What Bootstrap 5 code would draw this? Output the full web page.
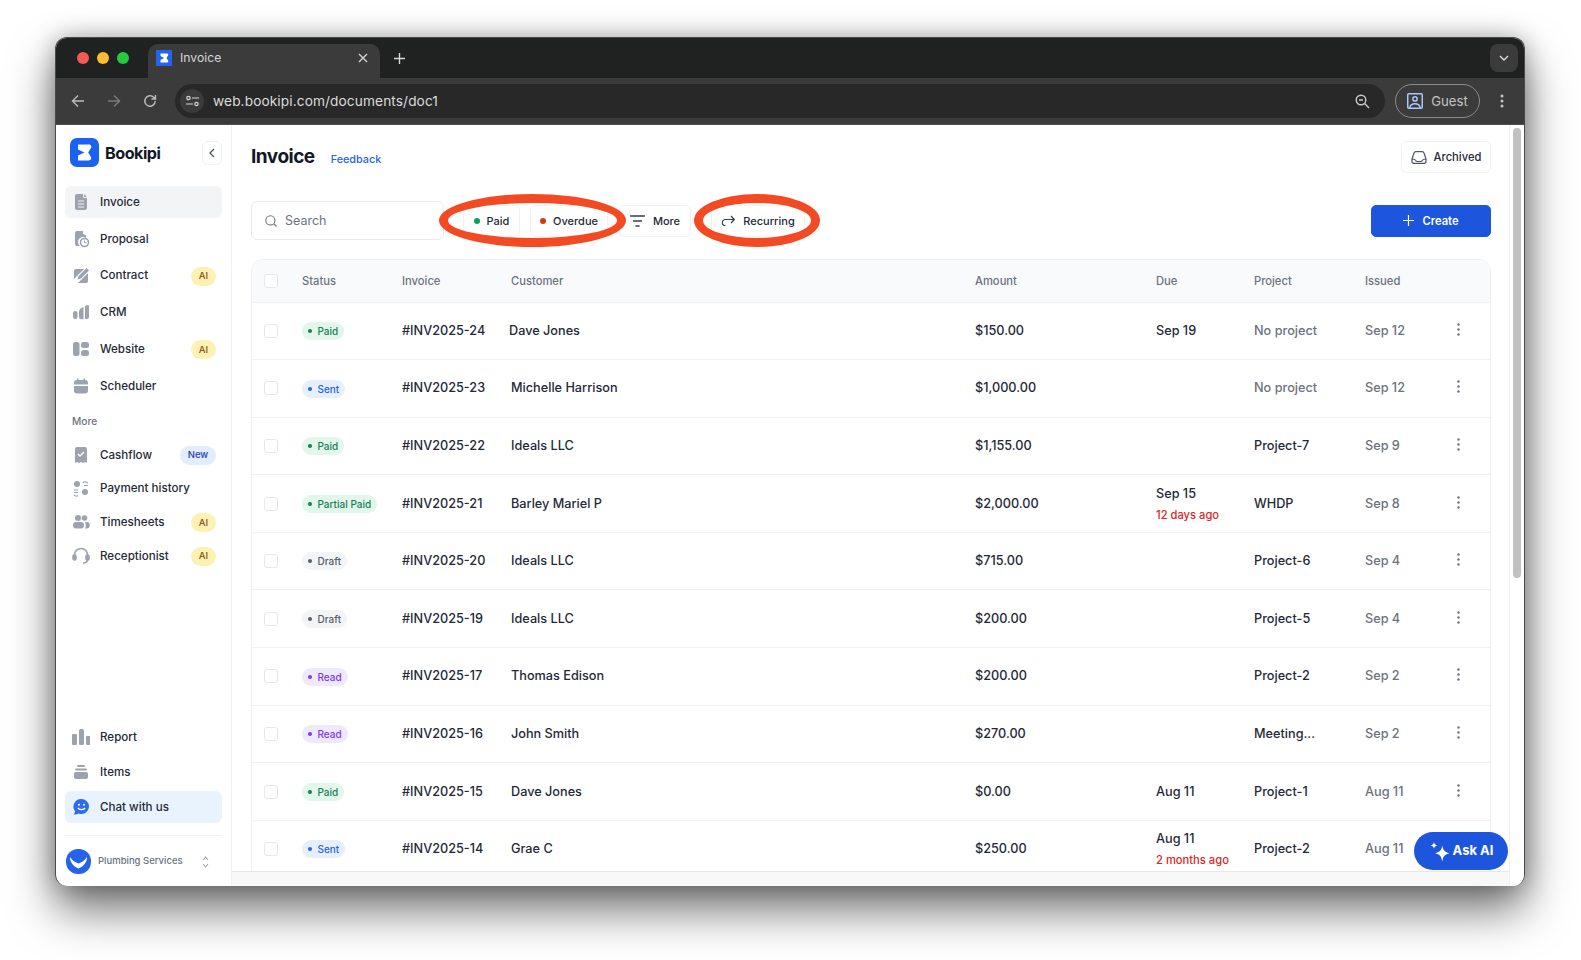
<!DOCTYPE html>
<html lang="en">
<head>
<meta charset="utf-8">
<title>Invoice</title>
<link href="https://cdn.jsdelivr.net/npm/bootstrap@5.3.0/dist/css/bootstrap.min.css" rel="stylesheet">
<style>
html,body{height:100%}
body{background:#fff;font-family:Inter,"Liberation Sans",sans-serif;color:#1f2937;overflow:hidden;padding:37px 56px 74px 55px}
.win{height:849px;border-radius:12px;overflow:hidden;box-shadow:0 24px 46px rgba(0,0,0,.55),0 0 24px rgba(0,0,0,.28);background:#fff;position:relative;border:1px solid #4a4a4a;border-bottom:0}
.strip{height:40px;background:#202221;position:relative}
.light{width:12px;height:12px;border-radius:50%}
.ltr{background:#f25c54}.lty{background:#febc2e}.ltg{background:#27c93f}
.lights{margin-left:21px;gap:8px}
.ctab{width:232px;height:34px;margin-left:19px;margin-top:6px;background:#3b3b3b;border-radius:10px 10px 0 0;color:#d6d6d6;font-size:12.2px;padding:0 12px 6px 8px;gap:8px}
.favi{width:16px;height:16px;flex:none}
.plus{margin-left:14px}
.expand{width:28px;height:28px;border-radius:8px;background:#3b3b3b;margin-right:6px}
.tbar{height:47px;background:#3b3b3b;padding:0 20px 0 15px;color:#b5b5b5;border-bottom:1px solid #4e4e4e}
.nav2{margin-left:22px}
.omni{flex:1;height:34px;background:#282828;border-radius:17px;color:#dcdcdc;font-size:13.7px;padding:0 15px 0 5px;margin:0 10px 0 18px;letter-spacing:.1px}
.tune{width:24px;height:24px;border-radius:50%;background:#3b3b3b;margin-right:9px}
.guest{width:85px;height:34px;border:1px solid #8b8b8b;border-radius:17px;font-size:13.2px;color:#c3c3c3;gap:8px;margin-right:20px}
.guest span{padding-top:1px}
.appw{height:762px;position:relative}
.side{width:176px;flex:none;border-right:1px solid #f0f1f3;padding:13px 9px 0 9px;height:762px}
.logo{width:29px;height:29px;flex:none;margin-left:5px}
.bname{font-size:16.2px;font-weight:700;color:#111827;letter-spacing:-.5px;margin-left:6px;flex:1;padding-top:2px}
.coll{width:20px;height:24px;border:1px solid #f0f1f3;border-radius:6px;margin-top:1px}
.mi{height:32px;border-radius:6px;font-size:11.6px;font-weight:500;color:#1f2937;padding:0 6px 0 7px}
.mi svg{width:18px;height:18px;flex:none;margin-right:10px}
.mi .lbl{flex:1;padding-top:1px}
.g1{margin-top:19px;display:flex;flex-direction:column;gap:4.8px}
.g2{display:flex;flex-direction:column;gap:1.7px}
.g3{margin-top:auto;display:flex;flex-direction:column;gap:3px}
.more{font-size:10.2px;color:#6b7280;font-weight:500;margin:13px 0 11px 7px;line-height:13px}
.on{background:#f3f4f6}
.chat{background:#e9f3fe}
.pillai{background:#fdf2b3;color:#854d0e;font-size:9.5px;font-weight:500;border-radius:10px;width:25px;height:19px;margin-top:1px}
.pillnew{background:#e2edfd;color:#1e40af;font-size:9.5px;font-weight:500;border-radius:10px;width:36px;height:19px;margin-top:1px}
.foot{border-top:1px solid #f0f1f3;height:52px;margin-top:9px;padding:0 0 0 1px;font-size:9.5px;color:#6b7280;font-weight:500;position:relative}
.org{width:25px;height:25px;flex:none;margin-right:7px}
.chev{margin-right:13px}
.main{flex:1;min-width:0;height:746px;padding:17px 18px 0 19px;overflow:hidden}
.ttl{font-size:19px;font-weight:700;color:#111827;letter-spacing:-.5px;line-height:30px}
.fb{font-size:10.8px;font-weight:500;color:#2563eb;margin-left:16px;padding-top:10px}
.wbtn{border:1px solid #f0f1f3;border-radius:6px;background:#fff;font-size:11px;font-weight:500;color:#1f2937;height:32px;gap:7px}
.wbtn span,.srch span,.cbtn span{padding-top:1px}
.arch{width:90px;font-size:11.2px;margin-top:-1px}
.arch span{padding-top:0}
.bar{margin-top:28px;height:39px;position:relative}
.srch{width:193px;height:39px;border:1px solid #e8eaed;border-radius:6px;color:#6b7280;font-size:12.5px;padding-left:13px;gap:8px}
.f1{width:57px;margin-left:19px}.f2{width:78px;margin-left:10px}.f3{width:72px;margin-left:11px;gap:8px}.f4{width:94px;margin-left:20px;gap:8px}
.fdot{width:6px;height:6px;border-radius:50%}
.dgreen{background:#0f9d66}.dred{background:#cc3f0c}
.cbtn{width:120px;height:32px;background:#1d56dc;border-radius:5px;color:#fff;font-size:11.2px;font-weight:600;gap:8px;margin-left:auto;border:1px solid #1d56dc}
.ring{position:absolute;border:9px solid #f34a23;border-radius:50%;height:53px;top:-7px;pointer-events:none}
.r1{left:188px;width:187px}.r2{left:443px;width:126px}
.twrap{margin-top:19px;border:1px solid #f0f1f3;border-radius:12px 12px 0 0;overflow:hidden}
.tbl{width:100%;table-layout:fixed;border-collapse:collapse;margin:0}
.tbl th{background:#f9fafb;height:42px;font-size:11.2px;font-weight:500;color:#6b7280;padding:1px 0 0 0;vertical-align:middle;border-bottom:1px solid #f0f1f3}
.tbl td{height:57.6px;font-size:12.7px;font-weight:500;color:#1f2937;padding:0;vertical-align:middle;border-bottom:1px solid #f0f1f3;line-height:18px}
.c0{width:50px}.c1{width:100px}.c2{width:109px}.c3{width:464px}.c4{width:181px}.c5{width:98px}.c6{width:111px}.c7{width:83px}
.chk{display:block;width:14px;height:14px;border:1px solid #e5e7eb;border-radius:3px;background:#fff;margin-left:12px}
.st{display:inline-flex;align-items:center;gap:5.5px;height:18px;border-radius:9px;font-size:10px;font-weight:500;padding:0 6px;line-height:18px;vertical-align:middle}
.st i{width:4px;height:4px;border-radius:50%;background:currentColor;display:block}
.s-paid{background:#e2f6ea;color:#16805a}.s-sent{background:#e5efff;color:#2563eb}.s-draft{background:#f3f4f6;color:#565d6b}.s-read{background:#efe9fe;color:#7c3aed}
.gray{color:#6b7280!important}
.late{font-size:11.2px;color:#dc2626;display:block;margin-top:4px;line-height:16px}
.nudge{margin-left:-2px;display:inline-block}
.dots{display:block;width:3px;height:13px;margin-left:9px;margin-top:-3px}
.vbar{width:15px;flex:none;background:#fff;border-left:1px solid #f0f1f3;height:762px;padding:3px 3px 0 3px}
.thumb{height:450px;background:#c1c1c1;border-radius:4px}
.hbar{position:absolute;left:176px;right:15px;bottom:0;height:16px;background:#f8f8f8;border-top:1px solid #e8e8e8}
.askai{position:absolute;left:1358px;top:707px;width:94px;height:38px;border-radius:19px;background:#1d56dc;color:#fff;font-size:13px;font-weight:700;gap:3px}
</style>
</head>
<body>
<div class="win">
  <div class="strip d-flex">
    <div class="lights d-flex align-items-center"><span class="light ltr"></span><span class="light lty"></span><span class="light ltg"></span></div>
    <div class="ctab d-flex align-items-center">
      <svg class="favi" viewBox="0 0 16 16"><rect width="16" height="16" fill="#2563eb"/><path fill="#fff" d="M4.500 3.500h6.500c1.300 0 1.800 1.500.9 2.300L10.500 8l1.400 2.200c.9.800.4 2.300-.9 2.300H4.500V10l3.500-2-3.500-2z"/></svg>
      <span class="flex-grow-1">Invoice</span>
      <svg width="10" height="10" viewBox="0 0 10 10" stroke="#d8d8d8" stroke-width="1.3"><path d="M1 1l8 8M9 1l-8 8"/></svg>
    </div>
    <svg class="plus align-self-center" width="11" height="11" viewBox="0 0 11 11" stroke="#d8d8d8" stroke-width="1.4"><path d="M5.500 0v11M0 5.500h11"/></svg>
    <div class="ms-auto align-self-center expand d-flex align-items-center justify-content-center">
      <svg width="10" height="6" viewBox="0 0 10 6" fill="none" stroke="#ddd" stroke-width="1.4"><path d="M1 1l4 4 4-4"/></svg>
    </div>
  </div>
  <div class="tbar d-flex align-items-center">
    <svg width="14" height="14" viewBox="0 0 14 14" fill="none" stroke="#bdbdbd" stroke-width="1.4"><path d="M13 7H2M7 1.500 1.500 7 7 12.500"/></svg>
    <svg class="nav2" width="14" height="14" viewBox="0 0 14 14" fill="none" stroke="#7c7c7c" stroke-width="1.4"><path d="M1 7h11M7 1.500 12.500 7 7 12.500"/></svg>
    <svg class="nav2" width="14" height="14" viewBox="0 0 14 14" fill="none" stroke="#bdbdbd" stroke-width="1.4"><path d="M12.200 7a5.200 5.200 0 1 1-1.500-3.700L12.500 5M12.500 1v4h-4"/></svg>
    <div class="omni d-flex align-items-center">
      <span class="tune d-flex align-items-center justify-content-center">
        <svg width="13" height="12" viewBox="0 0 13 12" fill="none" stroke="#d5d5d5" stroke-width="1.2"><circle cx="2.500" cy="3" r="1.700"/><path d="M6 3h7M0 9h7"/><circle cx="10.500" cy="9" r="1.700"/></svg>
      </span>
      <span class="flex-grow-1">web.bookipi.com/documents/doc1</span>
      <svg width="15" height="15" viewBox="0 0 15 15" fill="none" stroke="#c8c8c8" stroke-width="1.4"><circle cx="6" cy="6" r="4.800"/><path d="M4 6h4M9.600 9.600 14 14"/></svg>
    </div>
    <div class="guest d-flex align-items-center justify-content-center">
      <svg width="16" height="16" viewBox="0 0 15 15" fill="none" stroke="#a8c7fa" stroke-width="1.4"><rect x=".7" y=".7" width="13.600" height="13.600" rx="1"/><circle cx="7.500" cy="5.600" r="2"/><path d="M2.500 14c.5-3 2.500-4 5-4s4.500 1 5 4"/></svg>
      <span>Guest</span>
    </div>
    <svg width="4" height="14" viewBox="0 0 4 14" fill="#c5c5c5"><circle cx="2" cy="2" r="1.500"/><circle cx="2" cy="7" r="1.500"/><circle cx="2" cy="12" r="1.500"/></svg>
  </div>

  <div class="appw d-flex">
    <aside class="side d-flex flex-column">
      <div class="d-flex align-items-center">
        <svg class="logo" viewBox="0 0 29 29"><rect width="29" height="29" rx="7" fill="#1a62f0"/><path fill="#fff" d="M8 6.500h11c2.300 0 3.200 2.800 1.500 4.200L18.200 14.500l2.300 3.800c1.500 1.700.5 4.200-1.700 4.200H8v-5l6.500-3-6.500-3z"/></svg>
        <span class="bname">Bookipi</span>
        <span class="coll d-flex align-items-center justify-content-center">
          <svg width="6" height="10" viewBox="0 0 6 10" fill="none" stroke="#4b5563" stroke-width="1.3"><path d="M5 1 1 5l4 4"/></svg>
        </span>
      </div>
      <div class="g1">
        <div class="mi on d-flex align-items-center"><svg viewBox="0 0 18 18" fill="#9ca3af"><path d="M3 3a2 2 0 0 1 2-2h6v2.500a1.500 1.500 0 0 0 1.500 1.500H15v10a2 2 0 0 1-2 2H5a2 2 0 0 1-2-2z"/><path d="M12 1l3 3h-3z"/><path d="M6 8h6M6 11h6M6 14h6" stroke="#f3f4f6" stroke-width="1"/></svg><span class="lbl">Invoice</span></div>
        <div class="mi d-flex align-items-center"><svg viewBox="0 0 18 18" fill="#9ca3af"><path d="M3 3a2 2 0 0 1 2-2h6v3l3 1v3a5 5 0 0 0-6 8H5a2 2 0 0 1-2-2z"/><circle cx="12.500" cy="12.500" r="4" fill="none" stroke="#9ca3af" stroke-width="1.600"/><path d="M12.500 10.500v2.300h2" fill="none" stroke="#9ca3af"/></svg><span class="lbl">Proposal</span></div>
        <div class="mi d-flex align-items-center"><svg viewBox="0 0 18 18" fill="#9ca3af"><path d="M2 4a2 2 0 0 1 2-2h8L2 12z"/><path d="M16 6v8a2 2 0 0 1-2 2H6z"/><path d="M14.500 1l2.500 2.500-8 8-3.500 1 1-3.500z"/></svg><span class="lbl">Contract</span><span class="pillai d-flex align-items-center justify-content-center">AI</span></div>
        <div class="mi d-flex align-items-center"><svg viewBox="0 0 18 18" fill="#9ca3af"><rect x="1" y="8" width="4.500" height="8" rx="2.200"/><path d="M7 9c0-2.500 2-4.500 4.500-5v12.200H9.200A2.200 2.200 0 0 1 7 14z"/><path d="M13 3.200c1-.7 2-1.200 3-1.200a1 1 0 0 1 1 1v11a2 2 0 0 1-2 2h-2z"/></svg><span class="lbl">CRM</span></div>
        <div class="mi d-flex align-items-center"><svg viewBox="0 0 18 18" fill="#9ca3af"><rect x="1" y="2" width="6.500" height="14" rx="2.500"/><rect x="9" y="2" width="8" height="6" rx="2.500"/><rect x="9" y="10" width="8" height="6" rx="2.500"/></svg><span class="lbl">Website</span><span class="pillai d-flex align-items-center justify-content-center">AI</span></div>
        <div class="mi d-flex align-items-center"><svg viewBox="0 0 18 18" fill="#9ca3af"><path d="M2 6a3 3 0 0 1 3-3V1.500h1.500V3h5V1.500H13V3a3 3 0 0 1 3 3v1.500H2z"/><path d="M2 9h14v4.500a3 3 0 0 1-3 3H5a3 3 0 0 1-3-3z"/></svg><span class="lbl">Scheduler</span></div>
      </div>
      <div class="more">More</div>
      <div class="g2">
        <div class="mi d-flex align-items-center"><svg viewBox="0 0 18 18" fill="#9ca3af"><path d="M3 3a2 2 0 0 1 2-2h8a2 2 0 0 1 2 2v14l-2-1-2 1-2-1-2 1-2-1-2 1z"/><path d="M6 8l2 2 4-4" fill="none" stroke="#fff" stroke-width="1.300"/></svg><span class="lbl">Cashflow</span><span class="pillnew d-flex align-items-center justify-content-center">New</span></div>
        <div class="mi d-flex align-items-center"><svg viewBox="0 0 18 18" fill="#9ca3af"><circle cx="5" cy="4" r="3"/><circle cx="13" cy="12" r="3"/><path d="M11 2.500c2-1 4-.5 5 1M16 5.500h-4M2 10h4M2 12.500h4M2 15c1 1 3 1.500 4 .5" fill="none" stroke="#9ca3af" stroke-width="1.200"/></svg><span class="lbl">Payment history</span></div>
        <div class="mi d-flex align-items-center"><svg viewBox="0 0 18 18" fill="#9ca3af"><circle cx="6" cy="5" r="3"/><circle cx="12.500" cy="5" r="2.800"/><rect x="1" y="9" width="11" height="6.500" rx="3.200"/><path d="M13 9h1.500a3 3 0 0 1 0 6.500H13c1-2 1-4.500 0-6.500z"/></svg><span class="lbl">Timesheets</span><span class="pillai d-flex align-items-center justify-content-center">AI</span></div>
        <div class="mi d-flex align-items-center"><svg viewBox="0 0 18 18" fill="none" stroke="#9ca3af" stroke-width="1.600"><path d="M2.500 10V8a6.500 6.500 0 0 1 13 0v2"/><rect x="1" y="8" width="3" height="5" rx="1.500" fill="#9ca3af"/><rect x="14" y="8" width="3" height="5" rx="1.500" fill="#9ca3af"/><path d="M15.500 13c0 2-2 3-4.500 3"/></svg><span class="lbl">Receptionist</span><span class="pillai d-flex align-items-center justify-content-center">AI</span></div>
      </div>
      <div class="g3">
        <div class="mi d-flex align-items-center"><svg viewBox="0 0 18 18" fill="#9ca3af"><rect x="0" y="6" width="5" height="11" rx="1"/><rect x="7" y="1" width="5" height="16" rx="1.500"/><rect x="14" y="8" width="4.500" height="9" rx="1"/></svg><span class="lbl">Report</span></div>
        <div class="mi d-flex align-items-center"><svg viewBox="0 0 18 18" fill="#9ca3af"><rect x="5" y="2" width="8" height="2" rx="1"/><rect x="3" y="5.500" width="12" height="2" rx="1"/><rect x="2" y="9" width="14" height="7" rx="2"/></svg><span class="lbl">Items</span></div>
        <div class="mi chat d-flex align-items-center"><svg viewBox="0 0 18 18"><path fill="#2b6cf0" d="M9.500 1a7.500 7.500 0 0 1 0 15c-1 0-2-.2-3-.6-1 .9-3 1.200-5 1.100 1-.8 1.500-2 1.500-3.500A7.500 7.500 0 0 1 9.500 1z"/><circle cx="7" cy="6.800" r="1" fill="#fff"/><circle cx="12" cy="6.800" r="1" fill="#fff"/><path d="M5.800 10c1.800 2.200 5.600 2.200 7.400 0" fill="none" stroke="#fff" stroke-width="1.200"/></svg><span class="lbl">Chat with us</span></div>
        <div class="foot d-flex align-items-center">
          <svg class="org" viewBox="0 0 25 25"><rect width="25" height="25" rx="12" fill="#2563eb"/><path fill="#fff" d="M4 8c2 3.500 5.500 5.500 8.500 6.500C15.500 13.500 19 11.500 21 8c.5 4-3 9.500-8.500 11.500C7 17.500 3.500 12 4 8z"/></svg>
          <span class="flex-grow-1">Plumbing Services</span>
          <svg class="chev" width="7" height="12" viewBox="0 0 7 12" fill="none" stroke="#9ca3af" stroke-width="1.100"><path d="M1 4l2.500-3L6 4M1 8l2.500 3L6 8"/></svg>
        </div>
      </div>
    </aside>

    <main class="main">
      <div class="d-flex align-items-start">
        <span class="ttl">Invoice</span>
        <a class="fb text-decoration-none">Feedback</a>
        <span class="wbtn arch ms-auto d-flex align-items-center justify-content-center">
          <svg width="16" height="13" viewBox="0 0 16 13" fill="none" stroke="#4b5563" stroke-width="1.200"><path d="M1 8l2-6a2 2 0 0 1 2-1.300h6A2 2 0 0 1 13 2l2 6M1 8v2.500A1.800 1.800 0 0 0 2.800 12.300h10.400a1.800 1.800 0 0 0 1.800-1.800V8c-2 0-3 0-3.500 1.200-.5 1-1 1.300-2 1.300h-3c-1 0-1.500-.3-2-1.300C4 8 3 8 1 8z"/></svg>
          <span>Archived</span>
        </span>
      </div>
      <div class="bar d-flex align-items-center">
        <div class="srch d-flex align-items-center">
          <svg width="12" height="12" viewBox="0 0 12 12" fill="none" stroke="#6b7280" stroke-width="1.100"><circle cx="5.400" cy="5.400" r="4.600"/><path d="M9 9l2.500 2.500"/></svg>
          <span>Search</span>
        </div>
        <div class="wbtn f1 d-flex align-items-center justify-content-center"><i class="fdot dgreen"></i><span>Paid</span></div>
        <div class="wbtn f2 d-flex align-items-center justify-content-center"><i class="fdot dred"></i><span>Overdue</span></div>
        <div class="wbtn f3 d-flex align-items-center justify-content-center">
          <svg width="15" height="12" viewBox="0 0 15 12" stroke="#374151" stroke-width="1.500"><path d="M0 1h15M3 6h9M5.500 11h4"/></svg><span>More</span></div>
        <div class="wbtn f4 d-flex align-items-center justify-content-center">
          <svg width="14" height="11" viewBox="0 0 14 11" fill="none" stroke="#374151" stroke-width="1.200"><path d="M13 4.500H4.500a3.200 3.200 0 0 0 0 6.400M10 1l3.300 3.500L10 8"/></svg><span>Recurring</span></div>
        <div class="cbtn d-flex align-items-center justify-content-center">
          <svg width="11" height="11" viewBox="0 0 11 11" stroke="#fff" stroke-width="1.200"><path d="M5.500 0v11M0 5.500h11"/></svg><span>Create</span></div>
        <span class="ring r1"></span>
        <span class="ring r2"></span>
      </div>
      <div class="twrap">
        <table class="tbl">
          <colgroup><col class="c0"><col class="c1"><col class="c2"><col class="c3"><col class="c4"><col class="c5"><col class="c6"><col class="c7"><col></colgroup>
          <thead><tr><th><span class="chk"></span></th><th>Status</th><th>Invoice</th><th>Customer</th><th>Amount</th><th>Due</th><th>Project</th><th>Issued</th><th></th></tr></thead>
          <tbody>
            <tr><td><span class="chk"></span></td><td><span class="st s-paid"><i></i>Paid</span></td><td>#INV2025-24</td><td><span class="nudge">Dave Jones</span></td><td>$150.00</td><td>Sep 19</td><td class="gray">No project</td><td class="gray">Sep 12</td><td><svg class="dots" viewBox="0 0 3 13" fill="#6b7280"><circle cx="1.500" cy="1.500" r="1.200"/><circle cx="1.500" cy="6.500" r="1.200"/><circle cx="1.500" cy="11.500" r="1.200"/></svg></td></tr>
            <tr><td><span class="chk"></span></td><td><span class="st s-sent"><i></i>Sent</span></td><td>#INV2025-23</td><td>Michelle Harrison</td><td>$1,000.00</td><td></td><td class="gray">No project</td><td class="gray">Sep 12</td><td><svg class="dots" viewBox="0 0 3 13" fill="#6b7280"><circle cx="1.500" cy="1.500" r="1.200"/><circle cx="1.500" cy="6.500" r="1.200"/><circle cx="1.500" cy="11.500" r="1.200"/></svg></td></tr>
            <tr><td><span class="chk"></span></td><td><span class="st s-paid"><i></i>Paid</span></td><td>#INV2025-22</td><td>Ideals LLC</td><td>$1,155.00</td><td></td><td>Project-7</td><td class="gray">Sep 9</td><td><svg class="dots" viewBox="0 0 3 13" fill="#6b7280"><circle cx="1.500" cy="1.500" r="1.200"/><circle cx="1.500" cy="6.500" r="1.200"/><circle cx="1.500" cy="11.500" r="1.200"/></svg></td></tr>
            <tr><td><span class="chk"></span></td><td><span class="st s-paid"><i></i>Partial Paid</span></td><td>#INV2025-21</td><td>Barley Mariel P</td><td>$2,000.00</td><td>Sep 15<span class="late">12 days ago</span></td><td>WHDP</td><td class="gray">Sep 8</td><td><svg class="dots" viewBox="0 0 3 13" fill="#6b7280"><circle cx="1.500" cy="1.500" r="1.200"/><circle cx="1.500" cy="6.500" r="1.200"/><circle cx="1.500" cy="11.500" r="1.200"/></svg></td></tr>
            <tr><td><span class="chk"></span></td><td><span class="st s-draft"><i></i>Draft</span></td><td>#INV2025-20</td><td>Ideals LLC</td><td>$715.00</td><td></td><td>Project-6</td><td class="gray">Sep 4</td><td><svg class="dots" viewBox="0 0 3 13" fill="#6b7280"><circle cx="1.500" cy="1.500" r="1.200"/><circle cx="1.500" cy="6.500" r="1.200"/><circle cx="1.500" cy="11.500" r="1.200"/></svg></td></tr>
            <tr><td><span class="chk"></span></td><td><span class="st s-draft"><i></i>Draft</span></td><td>#INV2025-19</td><td>Ideals LLC</td><td>$200.00</td><td></td><td>Project-5</td><td class="gray">Sep 4</td><td><svg class="dots" viewBox="0 0 3 13" fill="#6b7280"><circle cx="1.500" cy="1.500" r="1.200"/><circle cx="1.500" cy="6.500" r="1.200"/><circle cx="1.500" cy="11.500" r="1.200"/></svg></td></tr>
            <tr><td><span class="chk"></span></td><td><span class="st s-read"><i></i>Read</span></td><td>#INV2025-17</td><td>Thomas Edison</td><td>$200.00</td><td></td><td>Project-2</td><td class="gray">Sep 2</td><td><svg class="dots" viewBox="0 0 3 13" fill="#6b7280"><circle cx="1.500" cy="1.500" r="1.200"/><circle cx="1.500" cy="6.500" r="1.200"/><circle cx="1.500" cy="11.500" r="1.200"/></svg></td></tr>
            <tr><td><span class="chk"></span></td><td><span class="st s-read"><i></i>Read</span></td><td>#INV2025-16</td><td>John Smith</td><td>$270.00</td><td></td><td>Meeting...</td><td class="gray">Sep 2</td><td><svg class="dots" viewBox="0 0 3 13" fill="#6b7280"><circle cx="1.500" cy="1.500" r="1.200"/><circle cx="1.500" cy="6.500" r="1.200"/><circle cx="1.500" cy="11.500" r="1.200"/></svg></td></tr>
            <tr><td><span class="chk"></span></td><td><span class="st s-paid"><i></i>Paid</span></td><td>#INV2025-15</td><td>Dave Jones</td><td>$0.00</td><td>Aug 11</td><td>Project-1</td><td class="gray">Aug 11</td><td><svg class="dots" viewBox="0 0 3 13" fill="#6b7280"><circle cx="1.500" cy="1.500" r="1.200"/><circle cx="1.500" cy="6.500" r="1.200"/><circle cx="1.500" cy="11.500" r="1.200"/></svg></td></tr>
            <tr><td><span class="chk"></span></td><td><span class="st s-sent"><i></i>Sent</span></td><td>#INV2025-14</td><td>Grae C</td><td>$250.00</td><td>Aug 11<span class="late">2 months ago</span></td><td>Project-2</td><td class="gray">Aug 11</td><td></td></tr>
          </tbody>
        </table>
      </div>
    </main>
    <div class="vbar"><div class="thumb"></div></div>
    <div class="hbar"></div>
    <div class="askai d-flex align-items-center justify-content-center">
      <svg width="21" height="21" viewBox="0 0 19 19" fill="#fff"><path d="M12 4c.9 4.500 2.200 6 6.500 7-4.300 1-5.600 2.500-6.500 7.500-.9-5-2.200-6.500-6.500-7.500 4.300-1 5.600-2.500 6.500-7z"/><path d="M4.500 1c.4 2 1.100 2.600 3 3-1.900.4-2.600 1-3 3-.4-2-1.100-2.600-3-3 1.900-.4 2.600-1 3-3z"/></svg>
      <span>Ask AI</span>
    </div>
  </div>
</div>
<script src="https://cdn.jsdelivr.net/npm/bootstrap@5.3.0/dist/js/bootstrap.bundle.min.js"></script>
</body>
</html>
